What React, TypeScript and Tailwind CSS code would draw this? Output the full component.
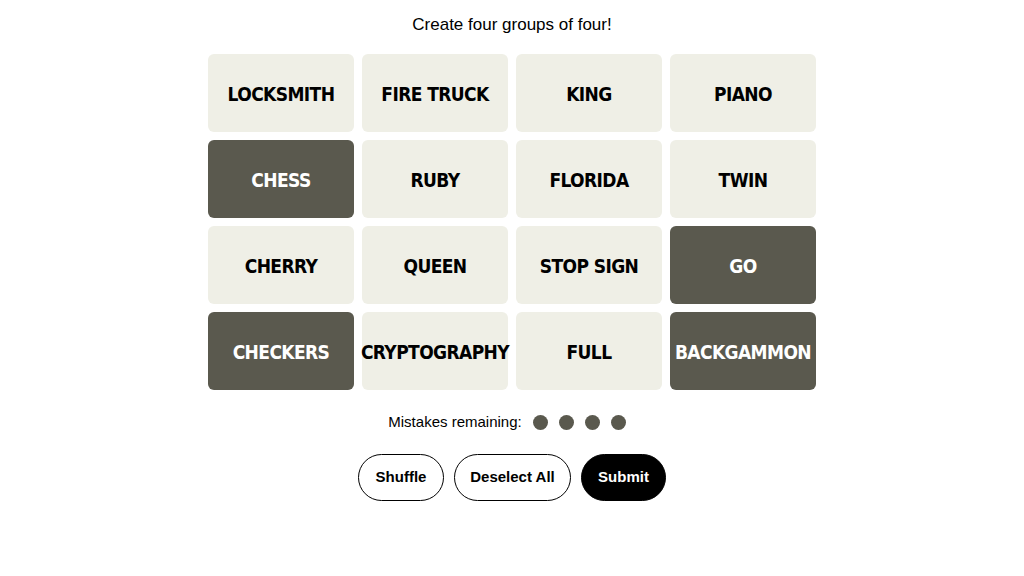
import React from "react";

const words = [
  { w: "LOCKSMITH", sel: false },
  { w: "FIRE TRUCK", sel: false },
  { w: "KING", sel: false },
  { w: "PIANO", sel: false },
  { w: "CHESS", sel: true },
  { w: "RUBY", sel: false },
  { w: "FLORIDA", sel: false },
  { w: "TWIN", sel: false },
  { w: "CHERRY", sel: false },
  { w: "QUEEN", sel: false },
  { w: "STOP SIGN", sel: false },
  { w: "GO", sel: true },
  { w: "CHECKERS", sel: true },
  { w: "CRYPTOGRAPHY", sel: false },
  { w: "FULL", sel: false },
  { w: "BACKGAMMON", sel: true },
];

export default function App() {
  return (
    <div className="flex h-[576px] w-[1024px] flex-col items-center bg-white font-['Liberation_Sans',sans-serif] text-black">
      <p className="mt-[14px] text-[17px] leading-[22px]">Create four groups of four!</p>
      <div className="mt-[18px] grid grid-cols-[repeat(4,146px)] grid-rows-[repeat(4,78px)] gap-x-[8px] gap-y-[8px]">
        {words.map((t) => (
          <button
            key={t.w}
            className={`flex items-center justify-center rounded-[6px] pt-[2px] font-['DejaVu_Sans_Condensed',sans-serif] text-[19px] font-bold tracking-[-0.6px] ${
              t.sel ? "bg-[#5a594e] text-white" : "bg-[#efefe6] text-black"
            }`}
          >
            {t.w}
          </button>
        ))}
      </div>
      <div className="mr-[10px] mt-[21px] flex items-center gap-[11px]">
        <span className="text-[15px]">Mistakes remaining:</span>
        {[0, 1, 2, 3].map((i) => (
          <span key={i} className="h-[15px] w-[15px] rounded-full bg-[#5a594e]" />
        ))}
      </div>
      <div className="mt-[20px] flex gap-[10px]">
        <button className="h-[47px] w-[86px] rounded-full border border-black text-[15px] font-bold">Shuffle</button>
        <button className="h-[47px] w-[117px] rounded-full border border-black text-[15px] font-bold">Deselect All</button>
        <button className="h-[47px] w-[85px] rounded-full border border-black bg-black text-[15px] font-bold text-white">Submit</button>
      </div>
    </div>
  );
}
